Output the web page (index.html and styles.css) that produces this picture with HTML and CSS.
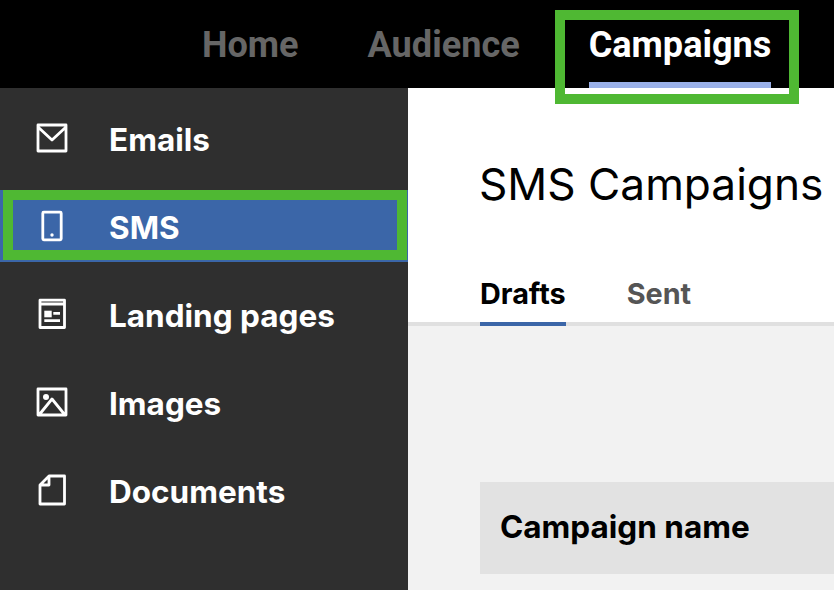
FILE: index.html
```html
<!DOCTYPE html>
<html lang="en">
<head>
<meta charset="utf-8">
<title>SMS Campaigns</title>
<link rel="stylesheet" href="styles.css">
</head>
<body>
<div class="app">
  <header class="topbar">
    <nav class="topnav">
      <a class="topnav-item">Home</a>
      <a class="topnav-item">Audience</a>
      <a class="topnav-item is-active">Campaigns</a>
    </nav>
  </header>
  <div class="body">
    <aside class="sidebar">
      <a class="side-item">
        <svg class="side-icon" viewBox="0 0 40 40"><path d="M6 7h28v26H6z M6 9l14 13L34 9"/></svg>
        <span class="side-label">Emails</span>
      </a>
      <a class="side-item is-active">
        <svg class="side-icon" viewBox="0 0 40 40"><rect x="10.800" y="6.200" width="18.400" height="27.600" rx="1"/><circle class="fill" cx="20" cy="29" r="1.700"/></svg>
        <span class="side-label">SMS</span>
      </a>
      <a class="side-item">
        <svg class="side-icon" viewBox="0 0 40 40"><path d="M8 6.200h24.500v27.300H8z M8 10h24.500"/><rect class="fill" x="12.300" y="16.700" width="7.400" height="6.600"/><path d="M21.300 19.300h6.700 M12.300 26.700h15.700"/></svg>
        <span class="side-label">Landing pages</span>
      </a>
      <a class="side-item">
        <svg class="side-icon" viewBox="0 0 40 40"><path d="M6 7h28v26H6z M7 33l13-16 13 16"/><circle class="fill" cx="14" cy="15" r="3"/></svg>
        <span class="side-label">Images</span>
      </a>
      <a class="side-item">
        <svg class="side-icon" viewBox="0 0 40 40"><path d="M17 6h15.500v28H8V15z M17 6v9H8"/></svg>
        <span class="side-label">Documents</span>
      </a>
    </aside>
    <main class="main">
      <div class="main-head">
        <h1 class="title">SMS Campaigns</h1>
        <div class="tabs">
          <a class="tab is-active">Drafts</a>
          <a class="tab">Sent</a>
        </div>
      </div>
      <div class="content">
        <div class="table-head">Campaign name</div>
      </div>
    </main>
  </div>
  <div class="highlight highlight-nav"></div>
  <div class="highlight highlight-side"></div>
</div>
</body>
</html>
```

FILE: styles.css
```css
* { box-sizing: border-box; }
html, body { margin: 0; padding: 0; }
body { font-family: "Inter", "Liberation Sans", sans-serif; background: #fff; overflow: hidden; }
.app { position: relative; width: 834px; height: 590px; overflow: hidden; }

.topbar { height: 88px; background: #000; display: flex; }
.topnav { display: flex; gap: 69px; padding-left: 202px; }
.topnav-item {
  height: 88px; line-height: 91px; font-family: "Roboto", sans-serif;
  font-weight: 700; font-size: 36.100px; color: #666; border-bottom: 6px solid transparent;
}
.topnav-item.is-active { color: #fff; border-bottom-color: #9ab0e8; }

.body { display: flex; height: 502px; }
.sidebar {
  width: 408px; flex: none; background: #2f2f2f;
  display: flex; flex-direction: column; gap: 16px; padding-top: 14px;
}
.side-item {
  height: 72px; display: flex; align-items: center; gap: 37px; padding-left: 32px;
  font-weight: 700; font-size: 31.500px; color: #fff;
}
.side-label { padding-top: 2px; }
.side-item.is-active { background: #3b66a8; }
.side-icon { width: 40px; height: 40px; flex: none; fill: none; stroke: #fff; stroke-width: 2.8; stroke-linejoin: round; }
.side-icon .fill { fill: #fff; stroke: none; }

.main { flex: 1; min-width: 0; display: flex; flex-direction: column; }
.main-head { height: 238px; padding: 64px 0 0 72px; border-bottom: 4px solid #e0e0e0; display: flex; flex-direction: column; }
.title { margin: 0 0 0 -1px; height: 64px; line-height: 64px; font-weight: 400; font-size: 44.200px; color: #000; white-space: nowrap; }
.tabs { display: flex; gap: 61px; margin-top: 46px; }
.tab {
  height: 64px; line-height: 64px; font-weight: 700; font-size: 28.800px; color: #555;
  border-bottom: 4px solid transparent;
}
.tab.is-active { color: #000; border-bottom-color: #3b66a8; }

.content { flex: 1; background: #f2f2f2; padding: 156px 0 0 72px; }
.table-head {
  height: 92px; background: #e2e2e2; padding: 0 0 4px 20px;
  display: flex; align-items: center;
  font-weight: 700; font-size: 31.500px; color: #000; white-space: nowrap;
}

.highlight { position: absolute; border: 10px solid #4fb833; }
.highlight-nav { left: 555px; top: 10px; width: 244px; height: 94px; }
.highlight-side { left: 3px; top: 190px; width: 404px; height: 70px; }
```
